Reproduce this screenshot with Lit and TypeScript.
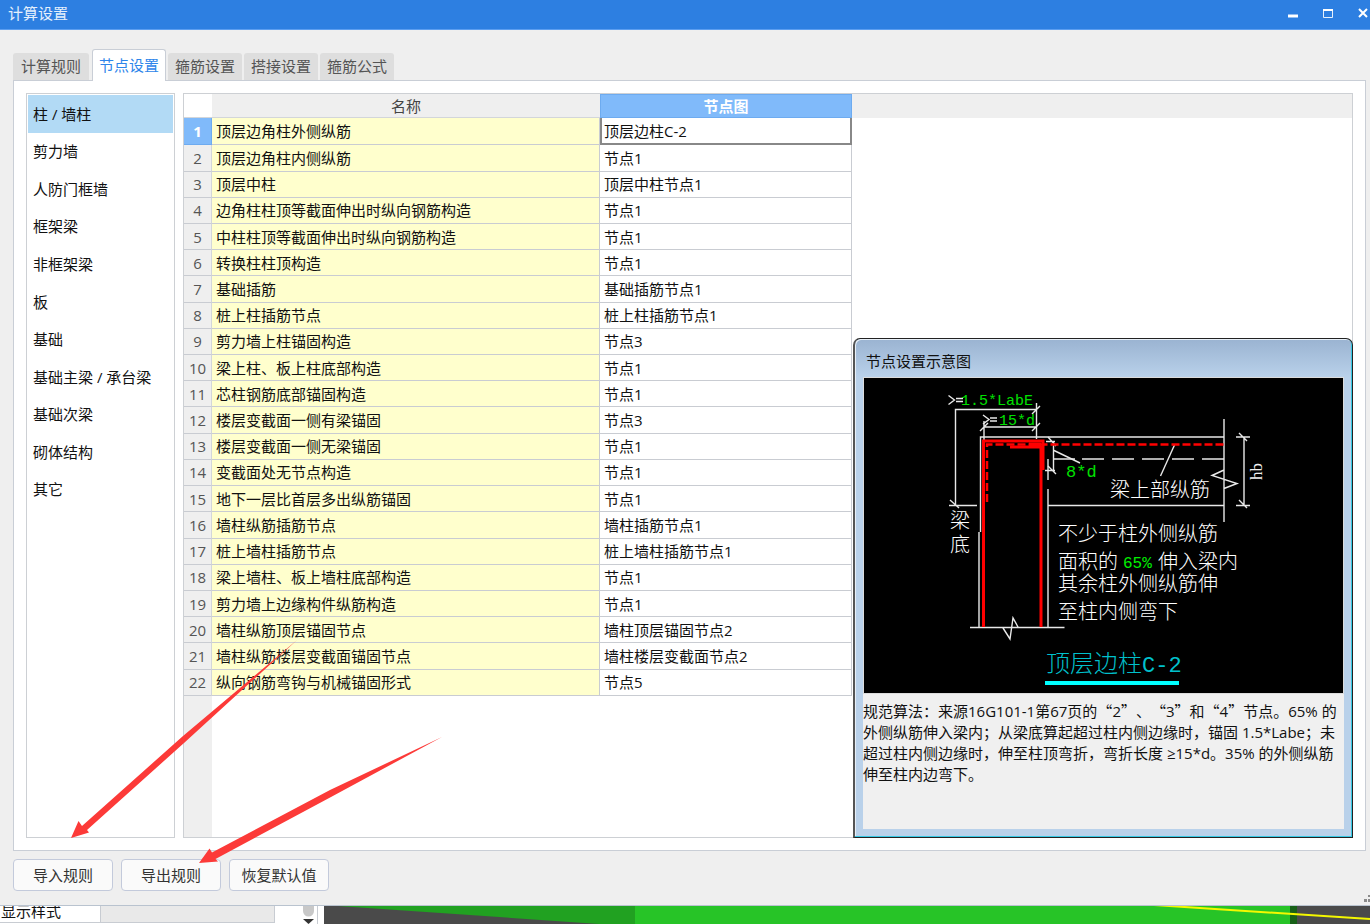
import { LitElement, html, css, svg } from "lit";
import { customElement, state } from "lit/decorators.js";
import { classMap } from "lit/directives/class-map.js";

const TABS = ["计算规则", "节点设置", "箍筋设置", "搭接设置", "箍筋公式"];

const CATEGORIES = [
  "柱 / 墙柱", "剪力墙", "人防门框墙", "框架梁", "非框架梁", "板",
  "基础", "基础主梁 / 承台梁", "基础次梁", "砌体结构", "其它",
];

const ROWS: [string, string][] = [
  ["顶层边角柱外侧纵筋", "顶层边柱C-2"],
  ["顶层边角柱内侧纵筋", "节点1"],
  ["顶层中柱", "顶层中柱节点1"],
  ["边角柱柱顶等截面伸出时纵向钢筋构造", "节点1"],
  ["中柱柱顶等截面伸出时纵向钢筋构造", "节点1"],
  ["转换柱柱顶构造", "节点1"],
  ["基础插筋", "基础插筋节点1"],
  ["桩上柱插筋节点", "桩上柱插筋节点1"],
  ["剪力墙上柱锚固构造", "节点3"],
  ["梁上柱、板上柱底部构造", "节点1"],
  ["芯柱钢筋底部锚固构造", "节点1"],
  ["楼层变截面一侧有梁锚固", "节点3"],
  ["楼层变截面一侧无梁锚固", "节点1"],
  ["变截面处无节点构造", "节点1"],
  ["地下一层比首层多出纵筋锚固", "节点1"],
  ["墙柱纵筋插筋节点", "墙柱插筋节点1"],
  ["桩上墙柱插筋节点", "桩上墙柱插筋节点1"],
  ["梁上墙柱、板上墙柱底部构造", "节点1"],
  ["剪力墙上边缘构件纵筋构造", "节点1"],
  ["墙柱纵筋顶层锚固节点", "墙柱顶层锚固节点2"],
  ["墙柱纵筋楼层变截面锚固节点", "墙柱楼层变截面节点2"],
  ["纵向钢筋弯钩与机械锚固形式", "节点5"],
];

/* Section drawing of the selected column node. */
@customElement("node-diagram")
class NodeDiagram extends LitElement {
  static styles = css`
    :host { display: block; border: 1px solid #dcdcdc; }
    svg { display: block; width: 100%; height: auto; background: #000; }
    .line { fill: none; stroke: #e8e8e8; stroke-width: 1.4; }
    .bar { fill: none; stroke: #f00; stroke-width: 3; }
    .note { fill: #fff; font: 300 20px "Noto Sans CJK SC", sans-serif; }
    .dim { fill: #00e000; font: 15px "Liberation Mono", monospace; }
    .dim-lg { fill: #00e000; font: 17px "Liberation Mono", monospace; }
    .pct { fill: #00f000; font: 16px "Liberation Mono", monospace; }
    .hb { fill: #f2f2f2; font: 17px "Liberation Serif", serif; }
    .name { fill: #00c0cc; font: 300 24px "Noto Sans CJK SC", sans-serif; }
    .code { font: 22px "Liberation Mono", monospace; }
  `;

  render() {
    return html`
      <svg viewBox="864 378 479 315" role="img" aria-label="顶层边柱C-2">
        ${svg`
        <g class="line">
          <path d="M948.5 395.5l6 4.5-6 4.5M956 398.5h7M956 401.5h7"/>
          <path d="M983 415l6 4.5-6 4.5M990 418h7M990 421h7"/>
          <path d="M955.5 505V409.5H1037M1036.5 403V439M1032 414l8-8"/>
          <path d="M984 421V441M984 427H1036M980 431l8-8M1032 431l8-8"/>
          <path d="M949 505.5H977M950 500l9 8"/>
          <path d="M1224 437H980.5V532M979 532V627"/>
          <path d="M1048 459V480M1048 489V627M1048 505.5H1224"/>
          <path d="M1046 441.5H1055M1048 437l8 9M1053.5 441V471M1045 470.5H1055M1048 466l8 8M1053 450l27 13"/>
          <path d="M1054 459H1075M1082 459H1104M1112 459H1134M1142 459H1164M1172 459H1194M1202 459H1224"/>
          <path d="M1224 419V522M1224 470l-12 5.500 25 8-13 5"/>
          <path d="M1244 437V505M1236 437H1250M1236 505.500H1250M1239 433l8 8M1239 500l8 8"/>
          <path d="M1174.500 445L1160.500 476"/>
          <path d="M970 627.500H1064.500M1003 628l7 11 3-21 5 9"/>
        </g>
        <g class="bar">
          <path d="M983.500 627V441H1043V470"/>
          <path d="M1041 627V447H1010M1029 444H1041"/>
          <path stroke-width="2.500" stroke-dasharray="8 3" d="M987 502V444.500H1225"/>
        </g>
        <text class="dim" x="961" y="405">1.5*LabE</text>
        <text class="dim" x="999" y="425">15*d</text>
        <text class="dim-lg" x="1066" y="477">8*d</text>
        <text class="hb" transform="rotate(-90 1262 480)" x="1262" y="480">hb</text>
        <text class="note" x="1110" y="497">梁上部纵筋</text>
        <text class="note" x="950" y="528">梁</text>
        <text class="note" x="950" y="552">底</text>
        <text class="note" x="1058" y="541">不少于柱外侧纵筋</text>
        <text class="note" x="1058" y="569">面积的</text>
        <text class="pct" x="1123" y="568">65%</text>
        <text class="note" x="1158" y="569">伸入梁内</text>
        <text class="note" x="1058" y="591">其余柱外侧纵筋伸</text>
        <text class="note" x="1058" y="619">至柱内侧弯下</text>
        <text class="name" x="1046" y="672">顶层边柱<tspan class="code">C-2</tspan></text>
        <path d="M1045 683H1179" stroke="#0ff" stroke-width="4"/>
        `}
      </svg>
    `;
  }
}

@customElement("app-root")
class AppRoot extends LitElement {
  @state() private tab = 1;
  @state() private category = 0;
  @state() private row = 0;

  static styles = css`
    :host {
      display: flex;
      flex-direction: column;
      position: relative;
      height: 100vh;
      overflow: hidden;
      box-sizing: border-box;
      font: 15px/20px "Open Sans", "Noto Sans CJK SC", sans-serif;
      color: #111;
    }
    * { box-sizing: border-box; }
    button { font: inherit; color: inherit; margin: 0; padding: 0; border: 0; background: none; }

    .dialog {
      flex: 1;
      min-height: 0;
      display: flex;
      flex-direction: column;
      background: #efefef;
      border-bottom: 1px solid #b9c3cf;
    }
    .titlebar {
      display: flex;
      align-items: center;
      justify-content: space-between;
      height: 30px;
      padding: 0 1px 4px 8px;
      background: #2d7fe1;
      border-bottom: 1px solid #5c9ef0;
      color: #e4effc;
    }
    .title { font: inherit; margin: 0; }
    .controls { display: flex; gap: 23px; }
    .control { width: 12px; height: 24px; display: grid; place-items: center; }
    .control svg { display: block; }

    .body { flex: 1; min-height: 0; display: flex; flex-direction: column; padding: 19px 4px 14px 13px; }
    .tabs { display: flex; align-items: flex-end; gap: 2px; height: 32px; margin-bottom: -1px; z-index: 1; }
    .tab {
      height: 28px;
      padding: 0 7px 2px;
      border-radius: 3px 3px 0 0;
      background: #dedede;
      color: #555;
      border-bottom: 1px solid #c9ced6;
    }
    .tab:first-child { padding: 0 8px 2px; }
    .tab.active {
      height: 32px;
      margin-left: 1px;
      padding: 0 6px 1px;
      border: 1px solid #c9ced6;
      border-bottom: 0;
      background: #fff;
      color: #2d85ea;
    }
    .panel {
      flex: 1;
      min-height: 0;
      display: flex;
      gap: 8px;
      padding: 12px;
      background: #fff;
      border: 1px solid #c9ced6;
    }
    .categories {
      width: 149px;
      margin: 0;
      padding: 1px;
      border: 1px solid #cdd0d4;
    }
    .category-list {
      display: flex;
      flex-direction: column;
      height: 413px;
      margin: 0;
      padding: 0;
      list-style: none;
    }
    .category-item { flex: 1; display: flex; }
    .category { flex: 1; padding: 0 5px; text-align: left; white-space: nowrap; }
    .category.active { background: #b2daf5; }

    .grid {
      position: relative;
      flex: 1;
      min-width: 0;
      border: 1px solid #cdd0d4;
      background:
        linear-gradient(#efefef, #efefef) 28px 0 / 100% 24px no-repeat,
        linear-gradient(#efefef, #efefef) 0 24px / 28px 100% no-repeat,
        #fff;
    }
    .table { border-collapse: separate; border-spacing: 0; table-layout: fixed; width: 668px; height: 602px; }
    .col-index { width: 28px; }
    .col-name { width: 388px; }
    .col-node { width: 252px; }
    .table th, .table td { padding: 0; font-weight: 400; line-height: 20px; white-space: nowrap; }
    .table thead th { height: 24px; color: #444; border-bottom: 1px solid #d3d6da; }
    .table thead .corner { background: #fff; }
    .table thead .picked { background: #80bafa; border: 1px solid #6dabf0; color: #fff; font-weight: 700; }
    .index { color: #555; background: #efefef; border-right: 1px solid #d3d6da; border-bottom: 1px solid #c9ccd2; }
    .table .index.picked { background: #80bafa; border-color: #6dabf0; color: #fff; font-weight: 700; }
    .table td { padding: 0 4px; border-right: 1px solid #c9ccd2; border-bottom: 1px solid #c9ccd2; }
    .table .name { background: #ffffcd; }
    .table .picked-cell { border: 2px solid #888; border-top: 0; padding: 0 2px; }

    .preview {
      position: absolute;
      right: -1px;
      bottom: -1px;
      width: 500px;
      height: 500px;
      display: flex;
      flex-direction: column;
      padding: 0 8px 8px;
      border: 1px solid #222;
      border-left: 2px solid #555;
      border-radius: 7px 7px 0 0;
      background: linear-gradient(#9ab3d1, #b9d1ea 38px);
      box-shadow: inset -1px -1px #35c8e4, inset 1px 1px #e8f0f8;
    }
    .preview-title { margin: 0; height: 38px; padding: 12px 0 0 3px; font: inherit; }
    .preview-body { flex: 1; background: #f0f0f0; }
    .preview-text { margin: 0; padding: 6px 0 0; line-height: 21px; white-space: nowrap; }
    .cjk { font-family: "Noto Sans CJK SC", sans-serif; text-spacing-trim: space-all; }
    .preview-line { display: block; }

    .actions { display: flex; gap: 8px; padding-top: 8px; }
    .action {
      width: 100px;
      height: 32px;
      border: 1px solid #c3cadb;
      border-radius: 4px;
      background: #fafafa;
      color: #333;
    }
    .grip { align-self: flex-end; margin: 0 -4px -11px auto; display: block; }

    .backdrop { display: flex; height: 18px; background: #fff; overflow: hidden; }
    .prop { display: flex; width: 275px; height: 17px; border-bottom: 1px solid #c8ccd2; overflow: hidden; }
    .prop-label { width: 101px; padding-left: 1px; line-height: 11px; border-right: 1px solid #c8ccd2; }
    .prop-value { flex: 1; background: #e9e9e9; border-right: 1px solid #c8ccd2; }
    .scroller { width: 43px; border-right: 1px solid #c8ccd2; }
    .scroller svg { display: block; margin-left: 28px; }
    .scene { flex: 1; min-width: 0; height: 18px; margin-left: 6px; display: block; }

    .marks { position: absolute; left: 0; top: 0; z-index: 2; pointer-events: none; }
  `;

  private renderPreview() {
    const q = (s: string) => html`<span class="cjk">${s}</span>`;
    return html`
      <section class="preview">
        <h2 class="preview-title">节点设置示意图</h2>
        <div class="preview-body">
          <node-diagram></node-diagram>
          <p class="preview-text">
            <span class="preview-line">规范算法：来源16G101-1第67页的${q("“")}2${q("”、“")}3${q("”")}和${q("“")}4${q("”")}节点。65% 的</span>
            <span class="preview-line">外侧纵筋伸入梁内；从梁底算起超过柱内侧边缘时，锚固 1.5*Labe；未</span>
            <span class="preview-line">超过柱内侧边缘时，伸至柱顶弯折，弯折长度 ≥15*d。35% 的外侧纵筋</span>
            <span class="preview-line">伸至柱内边弯下。</span>
          </p>
        </div>
      </section>
    `;
  }

  render() {
    return html`
      <main class="dialog">
        <header class="titlebar">
          <h1 class="title">计算设置</h1>
          <div class="controls">
            <button class="control" aria-label="最小化">
              <svg width="12" height="12"><path d="M1 9h10" stroke="#fff" stroke-width="3"/></svg>
            </button>
            <button class="control" aria-label="最大化">
              <svg width="12" height="12"><path d="M1.500 2v8.500h9V2" fill="none" stroke="#e6f0fc"/><path d="M1 3h10" stroke="#fff" stroke-width="2"/></svg>
            </button>
            <button class="control" aria-label="关闭">
              <svg width="12" height="12"><path d="M2 2l8 8M10 2l-8 8" stroke="#fff" stroke-width="2"/></svg>
            </button>
          </div>
        </header>
        <div class="body">
          <div class="tabs" role="tablist">
            ${TABS.map((t, i) => html`
              <button role="tab" aria-selected=${i === this.tab ? "true" : "false"}
                class=${classMap({ tab: true, active: i === this.tab })}
                @click=${() => (this.tab = i)}>${t}</button>`)}
          </div>
          <div class="panel">
            <nav class="categories">
              <ul class="category-list">
                ${CATEGORIES.map((c, i) => html`
                  <li class="category-item"><button
                    class=${classMap({ category: true, active: i === this.category })}
                    @click=${() => (this.category = i)}>${c}</button></li>`)}
              </ul>
            </nav>
            <div class="grid">
              <table class="table">
                <colgroup><col class="col-index"><col class="col-name"><col class="col-node"></colgroup>
                <thead>
                  <tr><th class="corner"></th><th scope="col">名称</th><th scope="col" class="picked">节点图</th></tr>
                </thead>
                <tbody>
                  ${ROWS.map(([name, node], i) => html`
                    <tr @click=${() => (this.row = i)}>
                      <th scope="row" class=${classMap({ index: true, picked: i === this.row })}>${i + 1}</th>
                      <td class="name">${name}</td>
                      <td class=${classMap({ "picked-cell": i === this.row })}>${node}</td>
                    </tr>`)}
                </tbody>
              </table>
              ${this.renderPreview()}
            </div>
          </div>
          <footer class="actions">
            <button class="action">导入规则</button>
            <button class="action">导出规则</button>
            <button class="action">恢复默认值</button>
            <svg class="grip" width="6" height="8"><path d="M0 5h3v3h-3zM4 1h2v2h-2zM4 5h2v3h-2z" fill="#8a8a8a"/></svg>
          </footer>
        </div>
      </main>

      <div class="backdrop">
        <div class="prop">
          <div class="prop-label">显示样式</div>
          <div class="prop-value"></div>
        </div>
        <div class="scroller">
          <svg width="12" height="18"><path d="M0 0h11v5a5.500 5.500 0 0 1-11 0z" fill="#c8c8c8"/><path d="M0 13h11l-5.500 5z" fill="#333"/></svg>
        </div>
        <svg class="scene" viewBox="0 0 1046 18" preserveAspectRatio="none">
          <path d="M0 0h1046v18H0z" fill="#4a4a4a"/>
          <path d="M14 0h297v18h-36z" fill="#21a121"/>
          <path d="M311 0h655v18H311z" fill="#27c427"/>
          <path d="M966 0h7v18h-7z" fill="#176017"/>
          <path d="M830 -1L1046 13" stroke="#f4f800" stroke-width="2" fill="none"/>
        </svg>
      </div>

      <svg class="marks" width="460" height="880" viewBox="0 0 460 880" aria-hidden="true">
        <g fill="#fc3a38">
          <path d="M71 838L78.500 821 82 826 183 736 297 640 184 743 87 830 89 832.500z"/>
          <path d="M199 863L209.500 848.500 212 852.500 330 790 442 737 331 797 215.500 859 218 861.500z"/>
        </g>
      </svg>
    `;
  }
}
